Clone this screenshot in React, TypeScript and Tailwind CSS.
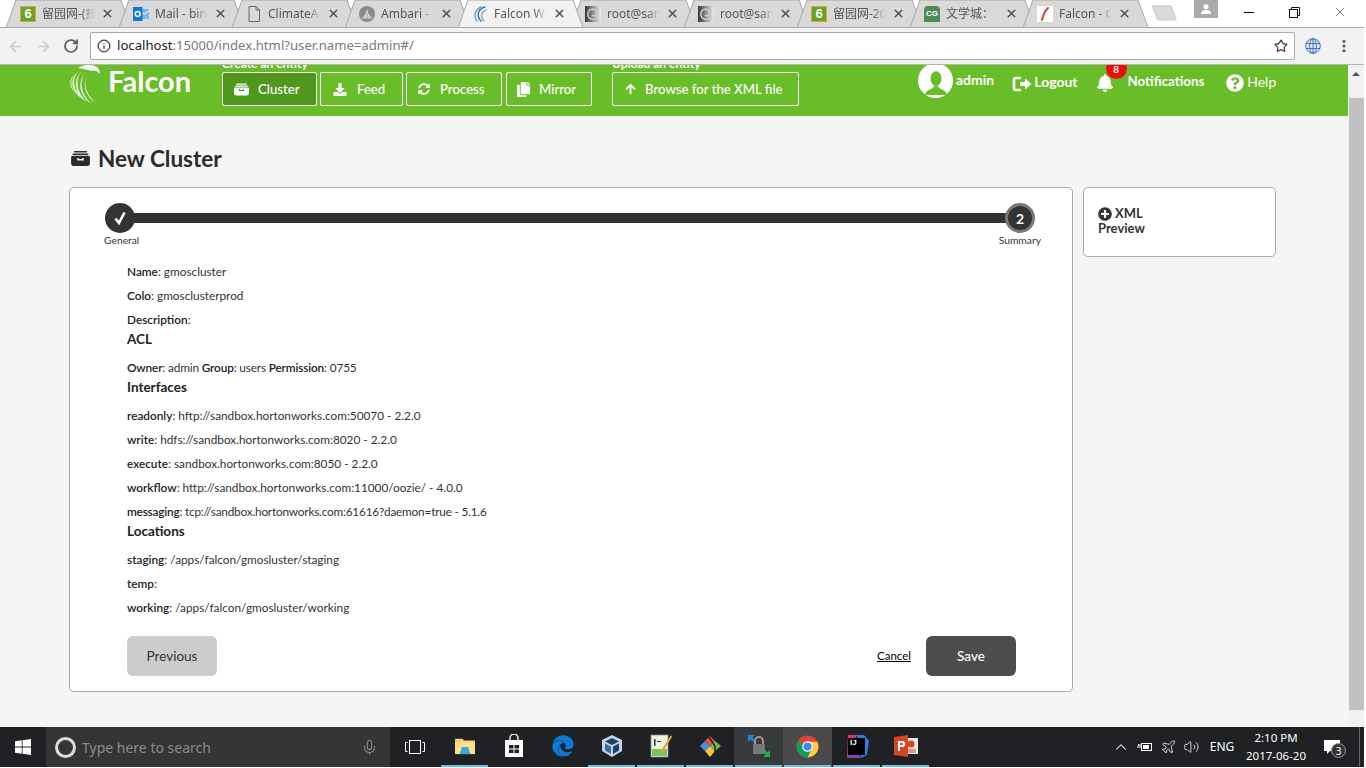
import type { ReactNode } from "react";
import { FaArrowUp, FaBell, FaCopy, FaDownload, FaEdge, FaPlusCircle, FaQuestionCircle, FaSyncAlt } from "react-icons/fa";
import { ArrowLeft, ArrowRight, ChevronUp, Info, Mic, MoreVertical, RotateCw, Star, Volume2, Plane, X } from "lucide-react";

function ArchiveIcon({ className }: { className?: string }) {
  return (
    <svg viewBox="0 0 20 16" className={className} fill="currentColor">
      <rect x="3" y="0" width="14" height="1.6" rx="0.8" />
      <rect x="1.5" y="2.6" width="17" height="1.8" rx="0.9" />
      <path d="M1 5.4h18a1 1 0 0 1 1 1V13a3 3 0 0 1-3 3H3a3 3 0 0 1-3-3V6.400a1 1 0 0 1 1-1Zm5.500 2v2.600h7V7.400h-1.600v1.100H8.100V7.400Z" fillRule="evenodd" />
    </svg>
  );
}

function LogoutIcon() {
  return (
    <svg viewBox="0 0 20 18" className="h-[18px] w-[20px]" fill="none" stroke="#fff">
      <path d="M9 3H4a2 2 0 0 0-2 2v8a2 2 0 0 0 2 2h5" strokeWidth="2.600" />
      <path d="M8 7h5V3.500L19.500 9 13 14.500V11H8Z" fill="#fff" strokeWidth="0" />
    </svg>
  );
}

function FalconLogo() {
  return (
    <svg viewBox="0 0 32 40" className="h-[40px] w-[32px]" fill="#fff">
      <path d="M9 3C13 0 21-1 26 1c3 1 5 4 5 8-2-3-5-4-8-3-4-1-9-2-14-3Z" opacity="0.9" />
      <path d="M21 7C14 14 14 27 27 38 17 32 11 18 21 7Z" />
      <path d="M18 6C10 13 10 28 23 39 12 33 6 17 18 6Z" />
      <path d="M14 5C6 12 6 26 18 37 7 31 2 15 14 5Z" opacity="0.95" />
      <path d="M10 6C3 12 3 24 13 33 3 28-1 14 10 6Z" opacity="0.85" />
      <path d="M6 9C1 14 1 22 7 28 0 24-1 14 6 9Z" opacity="0.75" />
    </svg>
  );
}

function SixIcon({ ring }: { ring: string }) {
  return (
    <span className={`flex h-4 w-4 items-center justify-center border ${ring} bg-[#5fa631] font-['Liberation_Sans',sans-serif] text-[13px] leading-none font-bold text-white`}>
      6
    </span>
  );
}

function OutlookIcon() {
  return (
    <svg viewBox="0 0 16 16" className="h-4 w-4">
      <rect x="7" y="3" width="9" height="10" fill="#7cb7e8" />
      <path d="M7 5l4.500 3L16 5" fill="none" stroke="#fff" strokeWidth="1" />
      <rect x="0" y="1" width="9.500" height="14" fill="#0f78d4" />
      <circle cx="4.700" cy="8" r="2.400" fill="none" stroke="#fff" strokeWidth="1.500" />
    </svg>
  );
}

function DocIcon() {
  return (
    <svg viewBox="0 0 16 16" className="h-4 w-4" fill="none" stroke="#666" strokeWidth="1">
      <path d="M3 .5h7L13.500 4v11.500H3Z" />
      <path d="M10 .5V4h3.500" />
    </svg>
  );
}

function AmbariIcon() {
  return (
    <svg viewBox="0 0 16 16" className="h-4 w-4">
      <circle cx="8" cy="8" r="8" fill="#8a8a8a" />
      <path d="M8 3l1.500 5 4 4.500H2.500L6.500 8Z" fill="#e3e3e3" />
      <path d="M8 7v6M5.500 9.500 4.500 13M10.500 9.500 11.500 13" stroke="#8a8a8a" strokeWidth="0.800" />
    </svg>
  );
}

function WaveIcon() {
  return (
    <svg viewBox="0 0 16 16" className="h-4 w-4" fill="none" strokeLinecap="round">
      <path d="M13 1C6 3 4 10 9 15" stroke="#2f6f9f" strokeWidth="1.400" />
      <path d="M9 1C3 4 1 10 5 15" stroke="#6a9cc0" strokeWidth="1.400" />
      <path d="M14 4C9 6 8 10 12 15" stroke="#8fb4cf" strokeWidth="1.400" />
    </svg>
  );
}

function SpiralIcon() {
  return (
    <svg viewBox="0 0 16 16" className="h-4 w-4">
      <defs>
        <linearGradient id="sp" x1="0" y1="0" x2="1" y2="0">
          <stop offset="0" stopColor="#333" />
          <stop offset="1" stopColor="#eee" />
        </linearGradient>
      </defs>
      <rect width="16" height="16" fill="url(#sp)" />
      <path d="M13 9.500A5.200 5.200 0 1 1 8 3a4 4 0 0 1 3.500 4.500 2.600 2.600 0 0 1-4.500 1.500" fill="none" stroke="#ccc" strokeWidth="1.600" />
    </svg>
  );
}

function CgIcon() {
  return (
    <span className="flex h-4 w-4 items-center justify-center rounded-t-[4px] bg-[#4f8a5b] font-['Liberation_Sans',sans-serif] text-[8px] leading-none font-bold text-white">
      CG
    </span>
  );
}

function FeatherIcon() {
  return (
    <span className="flex h-4 w-4 items-center justify-center bg-white">
      <svg viewBox="0 0 16 16" className="h-4 w-4" fill="none" strokeLinecap="round">
        <path d="M5 14C6 9 8 5 11 2" stroke="#d8462f" strokeWidth="2" />
        <path d="M7 8c1-3 2-5 4-6" stroke="#8a4b9e" strokeWidth="0.800" />
      </svg>
    </span>
  );
}

const tabs: { title: string; icon: ReactNode; active?: boolean }[] = [
  { title: "留园网-(技术", icon: <SixIcon ring="border-[#f0a030]" /> },
  { title: "Mail - bing", icon: <OutlookIcon /> },
  { title: "ClimateAr", icon: <DocIcon /> },
  { title: "Ambari - S", icon: <AmbariIcon /> },
  { title: "Falcon We", icon: <WaveIcon />, active: true },
  { title: "root@san", icon: <SpiralIcon /> },
  { title: "root@san", icon: <SpiralIcon /> },
  { title: "留园网-20", icon: <SixIcon ring="border-[#f0a030]" /> },
  { title: "文学城：", icon: <CgIcon /> },
  { title: "Falcon - C", icon: <FeatherIcon /> },
];

function Tab({ title, icon, active }: { title: string; icon: ReactNode; active?: boolean }) {
  return (
    <div className={`relative flex h-[27px] w-[113px] shrink-0 items-center pl-[14px] ${active ? "z-10" : ""}`}>
      <svg viewBox="0 0 127 28" className="absolute top-0 left-0 h-[28px] w-[127px]">
        <path d="M0 28 10 0H115L125 27.500" fill={active ? "#f2f2f2" : "#d9d9d9"} stroke="#a8a8a8" />
      </svg>
      <span className="relative flex h-4 w-4 items-center justify-center">{icon}</span>
      <span className="relative ml-[6px] w-[53px] overflow-hidden text-[12px] leading-4 whitespace-nowrap text-[#555] [mask-image:linear-gradient(to_right,black_75%,transparent)]">
        {title}
      </span>
      <X className="relative ml-[6px] h-[13px] w-[13px] text-[#555]" strokeWidth={3} />
    </div>
  );
}

function ChromeBar() {
  return (
    <div className="flex h-[27px] items-start bg-white font-['Noto_Sans','Noto_Sans_CJK_SC',sans-serif]">
      <div className="flex pl-[6px]">
        {tabs.map((t, i) => (
          <Tab key={i} title={t.title} icon={t.icon} active={t.active} />
        ))}
      </div>
      <svg viewBox="0 0 36 24" className="mt-[5px] ml-[12px] h-[19px] w-[36px]">
        <path d="M1 1h22a2 2 0 0 1 2 1l6 16a2 2 0 0 1-2 1H9a2 2 0 0 1-2-1L1 3Z" fill="#d9d9d9" stroke="#c4c4c4" />
      </svg>
      <div className="ml-[10px] flex h-[18px] w-[24px] items-center justify-center bg-[#aaaaaa]">
        <svg viewBox="0 0 12 10" className="h-[10px] w-[12px]" fill="#fff">
          <circle cx="6" cy="2.800" r="2.500" />
          <path d="M1 10c0-3 2-4 5-4s5 1 5 4Z" />
        </svg>
      </div>
      <div className="ml-[8px] flex h-[24px] w-[46px] items-center justify-center">
        <div className="h-px w-[10px] bg-black" />
      </div>
      <div className="flex h-[24px] w-[45px] items-center justify-center">
        <svg viewBox="0 0 11 11" className="h-[11px] w-[11px]" fill="none" stroke="#111">
          <rect x="0.500" y="2.500" width="8" height="8" />
          <path d="M2.500 2.500v-2h8v8h-2" />
        </svg>
      </div>
      <div className="flex h-[24px] w-[46px] items-center justify-center">
        <X className="h-[14px] w-[14px] text-black" strokeWidth={1} />
      </div>
    </div>
  );
}

function Toolbar() {
  return (
    <div className="z-20 flex h-[38px] items-center border-t border-b border-t-[#a8a8a8] border-b-[#b4b4b4] bg-[#f2f2f2]">
      <ArrowLeft className="ml-[7px] h-[17px] w-[17px] text-[#cdcdcd]" strokeWidth={2.4} />
      <ArrowRight className="ml-[11px] h-[17px] w-[17px] text-[#cdcdcd]" strokeWidth={2.4} />
      <RotateCw className="ml-[11px] h-[16px] w-[16px] text-[#555]" strokeWidth={2.6} />
      <div className="ml-[11px] flex h-[28px] w-[1205px] items-center rounded-[2px] border border-[#a9a9a9] bg-white">
        <Info className="ml-[6px] h-[14px] w-[14px] text-[#444]" strokeWidth={2.2} />
        <span className="ml-[6px] font-['Noto_Sans',sans-serif] text-[13.150px] whitespace-nowrap text-[#7a7a7a]">
          <span className="text-[#222]">localhost</span>:15000/index.html?user.name=admin#/
        </span>
        <Star className="mr-[6px] ml-auto h-[14px] w-[14px] text-[#444]" strokeWidth={2.2} />
      </div>
      <svg viewBox="0 0 16 16" className="ml-[10px] h-[16px] w-[16px]" fill="none" stroke="#3f77b5" strokeWidth="1">
        <circle cx="8" cy="8" r="7.300" fill="#dfe8f2" />
        <ellipse cx="8" cy="8" rx="3.400" ry="7.300" />
        <path d="M1 5.500h14M1 10.500h14M8 .7v14.600" />
      </svg>
      <MoreVertical className="ml-[15px] h-[16px] w-[16px] text-[#555]" strokeWidth={2.6} />
    </div>
  );
}

function EntityButton({ label, icon, active, className }: { label: string; icon: ReactNode; active?: boolean; className: string }) {
  return (
    <button
      className={`flex h-[34px] items-center rounded-[2px] border border-white text-[13.200px] font-medium text-white ${className} ${
        active ? "bg-[#50971e]" : ""
      }`}
    >
      <span className="flex w-[16px] justify-center">{icon}</span>
      <span className="pt-[2px]">{label}</span>
    </button>
  );
}

function Header() {
  return (
    <div className="h-[51px] shrink-0 overflow-hidden bg-[#69bd28] pl-[69px] text-white">
      <div className="flex h-[51px] items-start">
        <div className="w-[153px]">
          <div className="flex items-start">
            <FalconLogo />
            <span className="mt-[-1px] ml-[7px] text-[29px] leading-[34px] font-bold">Falcon</span>
          </div>
        </div>
        <div className="-mt-[9px]">
          <div className="h-[16px] text-[12px] leading-[16px] font-bold">Create an entity</div>
          <div className="flex gap-[3px]">
            <EntityButton label="Cluster" className="w-[95px] gap-[9px] pl-[10px]" active icon={<ArchiveIcon className="h-[13px] w-[15px]" />} />
            <EntityButton label="Feed" className="w-[83px] gap-[9px] pl-[11px]" icon={<FaDownload className="h-[13px] w-[14px]" />} />
            <EntityButton label="Process" className="w-[96px] gap-[8px] pl-[9px]" icon={<FaSyncAlt className="h-[12px] w-[12px]" />} />
            <span className="ml-[1px]">
              <EntityButton label="Mirror" className="w-[86px] gap-[8px] pl-[8px]" icon={<FaCopy className="h-[15px] w-[15px]" />} />
            </span>
          </div>
        </div>
        <div className="-mt-[9px] ml-[20px]">
          <div className="h-[16px] text-[12px] leading-[16px] font-bold">Upload an entity</div>
          <EntityButton label="Browse for the XML file" className="w-[187px] gap-[7px] pl-[9px]" icon={<FaArrowUp className="h-[12px] w-[11px]" />} />
        </div>
        <div className="ml-[119px] flex h-[51px] items-start text-[14px] font-bold">
          <div className="-mt-[2px] flex h-[35px] w-[35px] items-end justify-center overflow-hidden rounded-full bg-white">
            <svg viewBox="0 0 24 24" className="h-[30px] w-[30px]" fill="#69bd28">
              <ellipse cx="12" cy="8.500" rx="4.300" ry="6" />
              <path d="M3.500 21.500c0-3 2.500-4 5-5 1-.5 1.500-1 1.500-2h4c0 1 .5 1.500 1.500 2 2.500 1 5 2 5 5Z" />
            </svg>
          </div>
          <span className="mt-[6px] ml-[3px] leading-[18px]">admin</span>
          <span className="mt-[10px] ml-[18px]">
            <LogoutIcon />
          </span>
          <span className="mt-[8px] ml-[2px] leading-[18px]">Logout</span>
          <div className="relative mt-[9px] ml-[19px]">
            <FaBell className="h-[18px] w-[16px]" />
            <span className="absolute -top-[16px] left-[9px] flex h-[21px] w-[21px] items-center justify-center rounded-full bg-[#f10a0a] text-[10px] leading-none">
              8
            </span>
          </div>
          <span className="mt-[7px] ml-[15px] text-[13.300px] leading-[18px]">Notifications</span>
          <FaQuestionCircle className="mt-[9px] ml-[22px] h-[18px] w-[18px]" />
          <span className="mt-[8px] ml-[3px] leading-[18px] font-normal">Help</span>
        </div>
      </div>
    </div>
  );
}

function Line({ children, className }: { children: ReactNode; className?: string }) {
  return <p className={`h-[24px] text-[11.800px] leading-[24px] text-[#333] ${className ?? ""}`}>{children}</p>;
}

function Heading({ children }: { children: ReactNode }) {
  return <h4 className="mb-[8px] h-[16px] text-[13.500px] leading-[14px] font-bold text-[#222]">{children}</h4>;
}

function L({ children }: { children: ReactNode }) {
  return <b className="font-semibold text-[#222]">{children}</b>;
}

function Stepper() {
  return (
    <div className="mr-[37px] ml-[35px] h-[56px]">
      <div className="flex items-center">
        <div className="z-10 flex h-[30px] w-[30px] items-center justify-center rounded-full bg-[#333]">
          <svg viewBox="0 0 14 14" className="h-[14px] w-[14px]" fill="none" stroke="#fff" strokeWidth="2.600">
            <path d="M2.500 7.500 6 12 11.500 1.500" />
          </svg>
        </div>
        <div className="-mx-[1px] h-[10px] flex-1 bg-[#333]" />
        <div className="z-10 flex h-[30px] w-[30px] items-center justify-center rounded-full border-[3px] border-[#777] bg-[#333] text-[14px] font-bold text-white">
          2
        </div>
      </div>
      <div className="flex justify-between text-[10.300px] leading-[15px] text-[#333]">
        <span className="-ml-[1px]">General</span>
        <span className="-mr-[6px]">Summary</span>
      </div>
    </div>
  );
}

function Summary() {
  return (
    <div className="h-[505px] w-[1004px] rounded-[5px] border border-[#a9a9a9] bg-white pt-[15px]">
      <Stepper />
      <div className="mt-[1px] pl-[57px]">
        <Line><L>Name</L>: gmoscluster</Line>
        <Line><L>Colo</L>: gmosclusterprod</Line>
        <Line><L>Description</L>:</Line>
        <Heading>ACL</Heading>
        <Line className="tracking-[-0.150px]"><L>Owner</L>: admin <L>Group</L>: users <L>Permission</L>: 0755</Line>
        <Heading>Interfaces</Heading>
        <Line><L>readonly</L>: hftp://sandbox.hortonworks.com:50070 - 2.2.0</Line>
        <Line><L>write</L>: hdfs://sandbox.hortonworks.com:8020 - 2.2.0</Line>
        <Line><L>execute</L>: sandbox.hortonworks.com:8050 - 2.2.0</Line>
        <Line><L>workflow</L>: http://sandbox.hortonworks.com:11000/oozie/ - 4.0.0</Line>
        <Line className="tracking-[-0.200px]"><L>messaging</L>: tcp://sandbox.hortonworks.com:61616?daemon=true - 5.1.6</Line>
        <Heading>Locations</Heading>
        <Line><L>staging</L>: /apps/falcon/gmosluster/staging</Line>
        <Line><L>temp</L>:</Line>
        <Line><L>working</L>: /apps/falcon/gmosluster/working</Line>
      </div>
      <div className="mt-[16px] flex items-center pr-[56px] pl-[57px]">
        <button className="h-[40px] w-[90px] rounded-[6px] bg-[#cccccc] text-[13.500px] text-[#333]">Previous</button>
        <a className="mr-[15px] ml-auto text-[11.500px] text-black underline">Cancel</a>
        <button className="h-[40px] w-[90px] rounded-[6px] bg-[#4d4d4d] text-[13.500px] font-medium text-white">Save</button>
      </div>
    </div>
  );
}

function Scrollbar() {
  return (
    <div className="flex w-[16px] shrink-0 flex-col items-center bg-[#f1f1f1]">
      <div className="mt-[7px] h-0 w-0 border-x-[4px] border-b-[4px] border-x-transparent border-b-[#505050]" />
      <div className="mt-[22px] h-[612px] w-[15px] bg-[#c1c1c1]" />
    </div>
  );
}

function Page() {
  return (
    <div className="flex min-h-0 flex-1">
      <div className="flex flex-1 flex-col bg-[#f5f5f5] font-['Lato',sans-serif]">
        <Header />
        <div className="flex h-[71px] items-center gap-[8px] pt-[14px] pl-[71px] text-[#2b2b2b]">
          <ArchiveIcon className="h-[15px] w-[19px]" />
          <h1 className="text-[22.500px] leading-[30px] font-bold">New Cluster</h1>
        </div>
        <div className="flex items-start gap-[10px] pl-[69px]">
          <Summary />
          <div className="h-[70px] w-[193px] rounded-[5px] border border-[#a9a9a9] bg-white pt-[18px] pl-[14px] text-[13px] leading-[15px] font-bold text-[#333]">
            <div className="flex items-center gap-[3px]">
              <FaPlusCircle className="h-[14px] w-[14px]" />
              <span>XML</span>
            </div>
            <div>Preview</div>
          </div>
        </div>
      </div>
      <Scrollbar />
    </div>
  );
}

function FolderIcon() {
  return (
    <svg viewBox="0 0 24 20" className="h-[18px] w-[22px]">
      <path d="M1 2h8l2 2h12v15H1Z" fill="#f6d365" />
      <rect x="1" y="6" width="22" height="13" fill="#fbe08c" />
      <path d="M8 11h8v3l2 5H6l2-5Z" fill="#37a6e6" />
    </svg>
  );
}

function StoreIcon() {
  return (
    <svg viewBox="0 0 20 24" className="h-[24px] w-[20px]">
      <path d="M6 7V4a4 4 0 0 1 8 0v3" fill="none" stroke="#fff" strokeWidth="1.400" />
      <path d="M1 6h18v17H1Z" fill="#fff" />
      <path d="M5 11h4.500v3.500H5Zm5.500 0H15v3.500h-4.500ZM5 15.500h4.500V19H5Zm5.500 0H15V19h-4.500Z" fill="#1f2124" />
    </svg>
  );
}

function BoxIcon() {
  return (
    <svg viewBox="0 0 22 24" className="h-[24px] w-[22px]">
      <path d="M11 1 21 6v11L11 23 1 17V6Z" fill="#c6d4e3" />
      <path d="M11 4 18 7.500 11 11 4 7.500Z" fill="#1d3f6b" />
      <path d="M4 9.500 10 12.500V20L4 16.500Z" fill="#3d6b9d" />
      <path d="M18 9.500 12 12.500V20L18 16.500Z" fill="#1d3f6b" />
    </svg>
  );
}

function NotepadIcon() {
  return (
    <svg viewBox="0 0 22 24" className="h-[24px] w-[22px]">
      <rect x="1" y="1" width="17" height="22" fill="#eef3df" stroke="#889" strokeWidth="0.800" />
      <rect x="2" y="15" width="15" height="7" fill="#7cc35c" />
      <path d="M4 5h1.500v7H4Zm3 2h4v1H7Z" fill="#333" />
      <path d="M21 1 12 15l-1 3 3-2 8-13Z" fill="#e9a825" />
    </svg>
  );
}

function GitIcon() {
  return (
    <svg viewBox="0 0 24 24" className="h-[24px] w-[24px]">
      <path d="M12 12 7 7l5-5 5 5Z" fill="#e05243" />
      <path d="M12 12 7 17l-5-5 5-5Z" fill="#4a90e2" />
      <path d="M12 12l5-5 6 5-6 5Z" fill="#7ab648" />
      <path d="M12 12l5 5-5 6-5-6Z" fill="#f4c63d" />
      <path d="M11 3l6 9v6" fill="none" stroke="#222" strokeWidth="1.400" />
    </svg>
  );
}

function LockIcon() {
  return (
    <svg viewBox="0 0 24 24" className="h-[24px] w-[24px]">
      <path d="M8 10V7a4 4 0 0 1 8 0v3" fill="none" stroke="#999" strokeWidth="2" />
      <rect x="6" y="10" width="12" height="10" rx="1" fill="#777" />
      <path d="M1 1h7L5.500 3.500 8 6 6 8 3.500 5.500 1 8Z" fill="#1a86e8" />
      <path d="M23 23h-7l2.500-2.500L16 18l2-2 2.500 2.500L23 16Z" fill="#22b14c" />
    </svg>
  );
}

function ChromeIcon() {
  return (
    <svg viewBox="0 0 24 24" className="h-[23px] w-[23px]">
      <circle cx="12" cy="12" r="11.500" fill="#db4437" />
      <path d="M12 12 1.800 6.800A11.500 11.500 0 0 0 12 23.500l5.500-10Z" fill="#0f9d58" />
      <path d="M12 7h10.300a11.500 11.500 0 0 1-10.300 16.500L17 13Z" fill="#ffcd40" />
      <circle cx="12" cy="12" r="5.500" fill="#fff" />
      <circle cx="12" cy="12" r="4.300" fill="#4285f4" />
    </svg>
  );
}

function IdeaIcon() {
  return (
    <span className="relative flex h-[24px] w-[24px] items-center justify-center">
      <svg viewBox="0 0 24 24" className="absolute inset-0 h-[24px] w-[24px]">
        <path d="M3 1h9L2 24Z" fill="#e0326c" />
        <path d="M12 1h7l5 6-2 14-6 3Z" fill="#2f7de1" />
        <path d="M2 24l3-16 11 16Z" fill="#8b3fb5" />
      </svg>
      <span className="relative h-[17px] w-[17px] bg-black pl-[2px] font-['Liberation_Sans',sans-serif] text-[8px] leading-[10px] font-bold text-white">
        IJ
      </span>
    </span>
  );
}

function PptIcon() {
  return (
    <svg viewBox="0 0 24 22" className="h-[22px] w-[24px]">
      <rect x="10" y="3" width="14" height="16" fill="#f0e6e2" />
      <circle cx="17" cy="9" r="3.500" fill="#d24726" />
      <path d="M14 15h8M14 17h8" stroke="#d24726" strokeWidth="1" />
      <path d="M0 2 14 0V22L0 20Z" fill="#d24726" />
      <path d="M4 6h4a2.500 2.500 0 0 1 0 6H6v4H4Zm2 2v2h2a1 1 0 0 0 0-2Z" fill="#fff" fillRule="evenodd" />
    </svg>
  );
}

const apps: { icon: ReactNode; running?: boolean; bg?: string }[] = [
  { icon: <FolderIcon />, running: true },
  { icon: <StoreIcon /> },
  { icon: <FaEdge className="h-[22px] w-[22px] text-[#0f78d4]" /> },
  { icon: <BoxIcon />, running: true },
  { icon: <NotepadIcon />, running: true },
  { icon: <GitIcon />, running: true },
  { icon: <LockIcon />, running: true, bg: "bg-[#38393b]" },
  { icon: <ChromeIcon />, running: true, bg: "bg-[#4a4a4a]" },
  { icon: <IdeaIcon />, running: true },
  { icon: <PptIcon />, running: true },
];

function Taskbar() {
  return (
    <div className="flex h-[40px] shrink-0 items-stretch bg-[#1f2124] font-['Noto_Sans',sans-serif] text-white">
      <div className="flex w-[46px] items-center justify-center">
        <svg viewBox="0 0 16 16" className="h-[16px] w-[16px]" fill="#fff">
          <path d="M0 2.300 6.800 1.300V7.600H0ZM7.600 1.200 16 0V7.600H7.600ZM0 8.400H6.800V14.700L0 13.700ZM7.600 8.400H16V16L7.600 14.800Z" />
        </svg>
      </div>
      <div className="flex w-[344px] items-center bg-[#353535] pl-[9px]">
        <span className="h-[21px] w-[21px] rounded-full border-[3px] border-[#ddd]" />
        <span className="ml-[6px] text-[14px] text-[#8c8c8c]">Type here to search</span>
        <Mic className="mr-[12px] ml-auto h-[17px] w-[17px] text-[#888]" strokeWidth={1.5} />
      </div>
      <div className="flex w-[50px] items-center justify-center">
        <svg viewBox="0 0 20 14" className="h-[14px] w-[20px]" fill="none" stroke="#fff" strokeWidth="1">
          <rect x="4.500" y="0.500" width="11" height="13" />
          <path d="M2.500 2.500h-2v9h2M17.500 2.500h2v9h-2" />
        </svg>
      </div>
      {apps.map((a, i) => (
        <div key={i} className={`relative flex w-[49px] items-center justify-center pb-[2px] ${a.bg ?? ""}`}>
          {a.icon}
          {a.running && <span className="absolute right-[1px] bottom-0 left-[1px] h-[2px] bg-[#76b9ed]" />}
        </div>
      ))}
      <div className="ml-auto flex items-center text-[12px]">
        <ChevronUp className="h-[18px] w-[24px]" strokeWidth={1.4} />
        <svg viewBox="0 0 16 10" className="h-[10px] w-[24px]" fill="none" stroke="#fff">
          <rect x="4.500" y="1.500" width="10" height="7" />
          <rect x="6" y="3" width="6" height="4" fill="#fff" stroke="none" />
          <path d="M0 5h4M1.500 2v2M3 2v2" />
        </svg>
        <Plane className="h-[16px] w-[23px]" strokeWidth={1.2} />
        <Volume2 className="h-[16px] w-[23px]" strokeWidth={1.2} />
        <span className="w-[38px] text-center">ENG</span>
        <div className="w-[70px] text-center text-[11.500px] leading-[18px]">
          <div>2:10 PM</div>
          <div>2017-06-20</div>
        </div>
        <div className="relative flex w-[41px] justify-center">
          <svg viewBox="0 0 16 14" className="h-[14px] w-[16px]" fill="#fff">
            <path d="M0 0h16v11H6l-3 3v-3H0Z" />
          </svg>
          <span className="absolute top-[3px] left-[20px] flex h-[15px] w-[15px] items-center justify-center rounded-full border border-[#999] bg-[#333] text-[10px] leading-none">
            3
          </span>
        </div>
        <div className="ml-[7px] h-full w-[5px] border-l border-[#666]" />
      </div>
    </div>
  );
}

export default function App() {
  return (
    <div className="flex h-[767px] w-[1364px] flex-col overflow-hidden">
      <ChromeBar />
      <Toolbar />
      <Page />
      <Taskbar />
    </div>
  );
}
